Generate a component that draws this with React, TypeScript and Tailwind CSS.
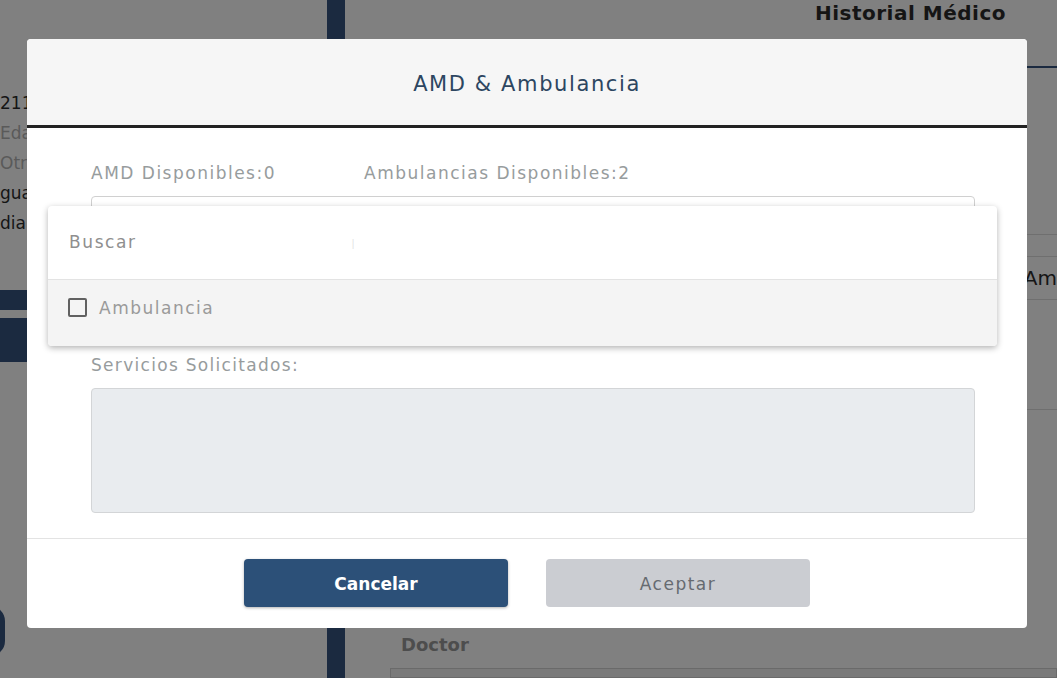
import React from "react";

const font = { fontFamily: "'DejaVu Sans', 'Noto Sans', sans-serif" };

const Background = () => (
  <div className="flex h-[678px] w-[1057px] bg-[#808080] overflow-hidden">
    {/* left panel */}
    <div className="w-[327px] flex flex-col">
      <div className="h-[88px]" />
      <div className="flex flex-col text-[17px] leading-[30px] text-[#151515]">
        <span>21145</span>
        <span className="text-[#5a5a5a]">Edad</span>
        <span className="text-[#5a5a5a]">Otro</span>
        <span>guardia</span>
        <span>dia</span>
      </div>
      <div className="h-[52px]" />
      <div className="h-[20px] bg-[#1b2a40]" />
      <div className="h-[8px]" />
      <div className="h-[44px] bg-[#1b2a40]" />
      <div className="flex-1" />
      <div className="h-[50px] w-[30px] -ml-[25px] mb-[22px] rounded-full bg-[#1b2a40]" />
    </div>
    <div className="w-[18px] bg-[#1b2a40]" />
    {/* right panel */}
    <div className="flex-1 flex flex-col">
      <div className="h-[68px] flex justify-end pr-[51px] border-b-2 border-[#1b2a40]">
        <span className="text-[20px] font-bold text-[#151515] leading-[26px] tracking-[0.5px]">Historial Médico</span>
      </div>
      <div className="h-[166px]" />
      <div className="h-[22px] border-t border-[#6f6f6f]" />
      <div className="h-[44px] border-t border-b border-[#6f6f6f] flex items-center justify-end">
        <span className="text-[20px] text-[#151515]">. Am</span>
      </div>
      <div className="h-[110px] border-b border-[#6f6f6f]" />
      <div className="flex-1" />
      <div className="pl-[56px] text-[18px] font-bold text-[#4d4d4d] pb-[10px]">Doctor</div>
      <div className="h-[10px] ml-[45px] border border-[#6a6a6a] bg-[#7a7a7a]" />
    </div>
  </div>
);

export default function App() {
  return (
    <div className="relative w-[1057px] h-[678px] overflow-hidden" style={font}>
      <Background />
      {/* modal */}
      <div className="absolute left-[27px] top-[39px] w-[1000px] h-[589px] bg-white rounded-[4px] flex flex-col">
        <div className="h-[89px] bg-[#f6f6f6] rounded-t-[4px] border-b-[3px] border-[#222] flex items-center justify-center pt-[5px]">
          <span className="text-[21px] text-[#2d4661] tracking-[1.6px]">AMD &amp; Ambulancia</span>
        </div>
        <div className="relative flex-1 flex flex-col pl-[64px] pr-[52px] pt-[34px]">
          <div className="flex text-[17px] text-[#979c9d] leading-[22px] tracking-[1.5px]">
            <span className="w-[273px]">AMD Disponibles:0</span>
            <span>Ambulancias Disponibles:2</span>
          </div>
          <div className="mt-[12px] h-[40px] border border-[#d0d0d0] rounded-[4px]" />
          <div className="h-[118px]" />
          <span className="text-[17px] text-[#979c9d] leading-[22px] tracking-[1.3px]">Servicios Solicitados:</span>
          <div className="mt-[12px] h-[125px] bg-[#e9ecef] border border-[#d3d5d7] rounded-[4px]" />
          {/* dropdown */}
          <div className="absolute left-[21px] top-[78px] w-[949px] h-[140px] bg-white rounded-[4px] shadow-[0_2px_6px_rgba(0,0,0,0.3)] flex flex-col overflow-hidden">
            <div className="h-[74px] flex items-center pl-[21px] border-b border-[#e3e3e3] relative">
              <span className="text-[17px] text-[#8f8f8f] tracking-[1.6px]">Buscar</span>
              <span className="absolute left-[303px] top-[28px] text-[14px] text-[#e0e0e0] font-light">I</span>
            </div>
            <div className="flex-1 bg-[#f4f4f4] flex items-start pt-[18px] pl-[20px] gap-[12px]">
              <div className="w-[19px] h-[19px] border-2 border-[#616161] rounded-[2px]" />
              <span className="text-[17px] text-[#9a9a9a] leading-[20px] tracking-[1.5px]">Ambulancia</span>
            </div>
          </div>
        </div>
        <div className="h-[90px] border-t border-[#e3e3e3] flex justify-center gap-[38px] pt-[20px]">
          <button className="w-[264px] h-[48px] pt-[4px] bg-[#2c5078] rounded-[4px] text-white text-[17px] font-bold shadow-[0_1px_3px_rgba(0,0,0,0.3)]">Cancelar</button>
          <button className="w-[264px] h-[48px] pt-[4px] bg-[#cbcdd2] rounded-[4px] text-[#666a70] text-[17px] tracking-[1.5px]">Aceptar</button>
        </div>
      </div>
    </div>
  );
}
